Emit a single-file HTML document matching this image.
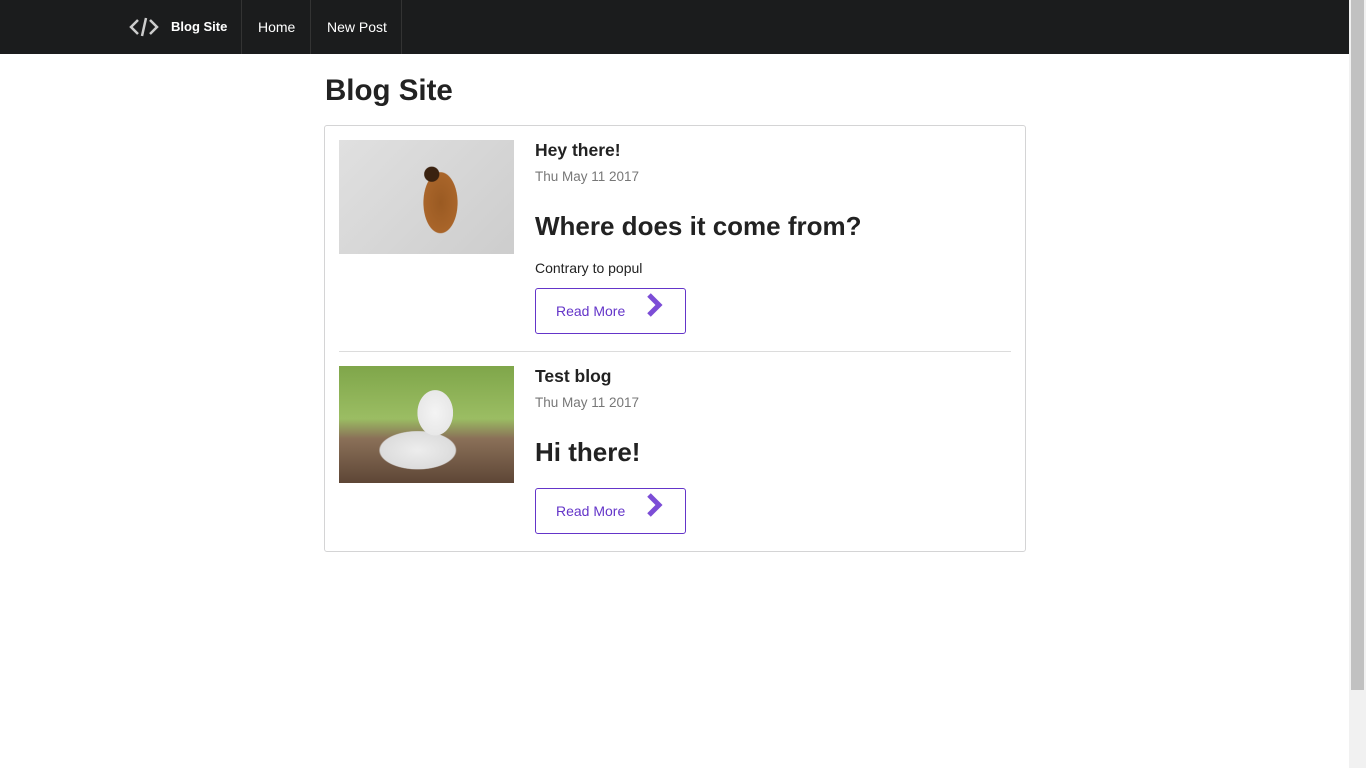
<!DOCTYPE html>
<html><head><meta charset="utf-8">
<style>
html,body{margin:0;padding:0;}
body{width:1366px;height:768px;overflow:hidden;background:#fff;font-family:"Liberation Sans",sans-serif;color:#222;position:relative;}
.nav{position:absolute;left:0;top:0;width:1349px;height:54px;background:#1b1c1d;}
.nav .item{position:absolute;top:0;height:54px;line-height:54px;color:#fff;font-size:14px;}
.sep{position:absolute;top:0;width:1px;height:54px;background:#333;}
.scroll{position:absolute;right:0;top:0;width:17px;height:768px;background:#f1f1f1;}
.scroll div{position:absolute;left:2px;top:0;width:13px;height:690px;background:#c1c1c1;}
h1{position:absolute;left:325px;top:74px;margin:0;font-size:29.5px;font-weight:bold;color:#222;}
.card{position:absolute;left:324px;top:125px;width:700px;height:425px;border:1px solid #d4d4d5;border-radius:3px;}
.img{position:absolute;width:175px;}
.t{position:absolute;left:535px;font-size:17.5px;font-weight:bold;color:#222;}
.d{position:absolute;left:535px;font-size:13.5px;color:#777;}
.h{position:absolute;left:535px;font-size:26px;font-weight:bold;color:#222;}
.p{position:absolute;left:535px;font-size:14px;color:#222;}
.btn{position:absolute;left:535px;width:149px;height:44px;border:1px solid #6435c9;border-radius:3px;}
.btn span{position:absolute;left:20px;top:14px;font-size:14px;color:#6435c9;}
.btn svg{position:absolute;left:108px;top:3px;}
</style></head><body>
<div class="nav">
 <svg style="position:absolute;left:129px;top:16px" width="30" height="22" viewBox="0 0 30 22"><path d="M9 4 L2 11 L9 18 M21 4 L28 11 L21 18 M17 2 L13 20" stroke="#ccc" stroke-width="2.5" fill="none"/></svg>
 <div class="item" style="left:171px;font-weight:bold;font-size:13px">Blog Site</div>
 <div class="sep" style="left:241px"></div>
 <div class="item" style="left:258px">Home</div>
 <div class="sep" style="left:310px"></div>
 <div class="item" style="left:327px">New Post</div>
 <div class="sep" style="left:401px"></div>
</div>
<div class="scroll"><div></div></div>
<h1>Blog Site</h1>
<div class="card"></div>
<div class="img" style="left:339px;top:140px;height:114px;background:radial-gradient(ellipse 8px 8px at 53% 30%,#3a2210 0,#3a2210 90%,transparent 100%),radial-gradient(ellipse 28px 50px at 58% 55%,#9a5a22 0%,#a9652a 60%,transparent 62%),linear-gradient(135deg,#e0e0e0,#cdcdcd);"></div>
<div class="img" style="left:339px;top:366px;height:117px;background:radial-gradient(ellipse 22px 28px at 55% 40%,#f4f4f4 0%,#e8e8e8 80%,transparent 82%),radial-gradient(ellipse 50px 25px at 45% 72%,#ededed 0%,#dcdcdc 75%,transparent 78%),linear-gradient(180deg,#7fa64a 0%,#9bbd63 45%,#8a7058 62%,#5e4636 100%);"></div>
<div class="t" style="top:140px">Hey there!</div>
<div class="d" style="top:169px">Thu May 11 2017</div>
<div class="h" style="top:211px">Where does it come from?</div>
<div class="p" style="top:260px">Contrary to popul</div>
<div class="btn" style="top:288px"><span>Read More</span><svg width="22" height="28" viewBox="0 0 22 28"><path d="M5 3 L15 13 L5 23" stroke="#7c4dd6" stroke-width="5" fill="none"/></svg></div>
<div style="position:absolute;left:339px;top:351px;width:672px;height:1px;background:#dcdcdc"></div>
<div class="t" style="top:366px">Test blog</div>
<div class="d" style="top:395px">Thu May 11 2017</div>
<div class="h" style="top:437px">Hi there!</div>
<div class="btn" style="top:488px"><span>Read More</span><svg width="22" height="28" viewBox="0 0 22 28"><path d="M5 3 L15 13 L5 23" stroke="#7c4dd6" stroke-width="5" fill="none"/></svg></div>
</body></html>
